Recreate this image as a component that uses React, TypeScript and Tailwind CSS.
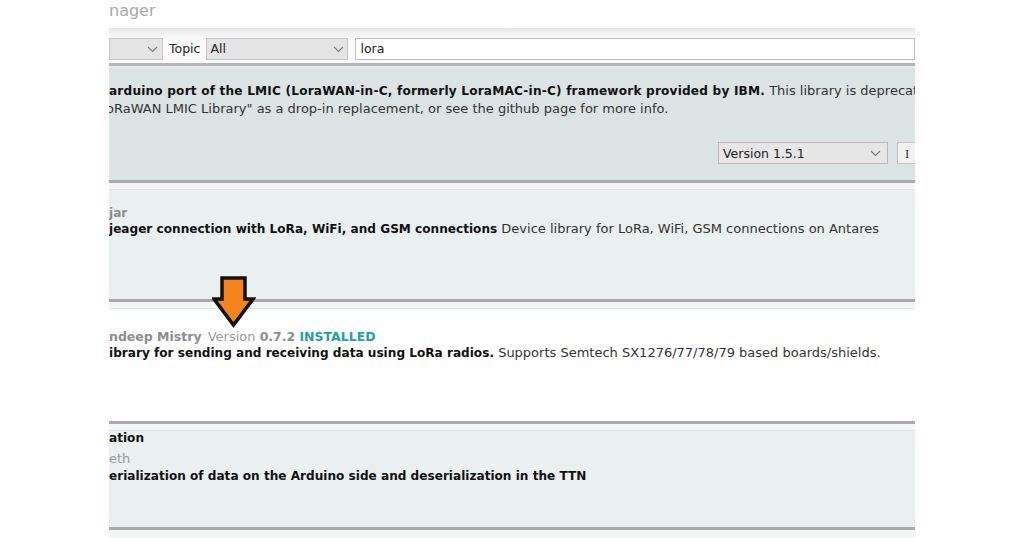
import React from 'react';

const Chevron = () => (
  <svg width="11" height="7" viewBox="0 0 11 7">
    <polyline points="1,1 5.5,5.5 10,1" fill="none" stroke="#7a7a7a" strokeWidth="1.2" />
  </svg>
);

const Divider = () => (
  <div className="flex flex-col">
    <div className="h-[3px] bg-[#a7abad]" />
    <div className="h-[6px] bg-[#f4f5f5]" />
    <div className="h-px bg-[#dde2e3]" />
  </div>
);

const DownArrow = () => (
  <svg className="absolute left-[212px] top-[276px]" width="44" height="52" viewBox="0 0 44 52">
    <polygon
      points="10,2 33,2 33,23 41,23 21.5,49 2,23 10,23"
      fill="#f5831f"
      stroke="#111"
      strokeWidth="3.5"
      strokeLinejoin="miter"
    />
  </svg>
);

const App = () => {
  return (
    <div className="relative h-[538px] w-[1024px] overflow-hidden bg-white font-['DejaVu_Sans',sans-serif] text-[13px]">
      <div className="ml-[109px] flex w-[806px] flex-col overflow-hidden">
        <p className="h-[28px] pt-[1px] text-[16px] leading-[20px] text-[#a8a8a8]">nager</p>

        {/* filter bar */}
        <div className="h-[9px] bg-gradient-to-b from-[#e6e6e6] to-[#f8f8f8]" />
        <div className="flex h-[24px] items-center gap-[6px] bg-[#fafafa] text-[12.5px] text-[#222]">
          <div className="flex h-[22px] w-[54px] items-center justify-end border border-[#c6c6c6] bg-[#e4e4e4] pr-[4px]">
            <Chevron />
          </div>
          <span>Topic</span>
          <div className="flex h-[22px] w-[142px] items-center justify-between border border-[#c6c6c6] bg-[#e4e4e4] px-[3px]">
            <span>All</span>
            <Chevron />
          </div>
          <div className="ml-[1px] flex h-[22px] flex-1 items-center border border-[#bdbdbd] bg-white px-[4px]">
            lora
          </div>
        </div>
        <div className="h-[2px] bg-[#fafafa]" />
        <div className="h-[3px] bg-[#b3b6b7]" />
        <div className="h-[2px] bg-[#e9ecec]" />

        {/* IBM LMIC */}
        <div className="flex h-[112px] flex-col bg-[#dce3e5] pt-[14px] leading-[17px] text-[#333]">
          <p className="whitespace-nowrap">
            <b className="text-[12.1px] tracking-[0.2px] text-[#111]">
              arduino port of the LMIC (LoraWAN-in-C, formerly LoraMAC-in-C) framework provided by IBM.
            </b>{' '}
            This library is deprecat
          </p>
          <p className="-ml-[3px] whitespace-nowrap">
            oRaWAN LMIC Library" as a drop-in replacement, or see the github page for more info.
          </p>
          <div className="mt-[25px] flex items-center gap-[9px] pl-[609px]">
            <div className="flex h-[22px] w-[170px] shrink-0 items-center justify-between border border-[#b9b9b9] bg-[#e6e6e6] pl-[4px] pr-[6px] text-[12.5px]">
              <span className="text-[#222]">Version 1.5.1</span>
              <Chevron />
            </div>
            <div className="flex h-[22px] w-[18px] shrink-0 items-center border-y border-l border-[#c2c2c2] bg-[#f1f1f1] pl-[7px] font-['Liberation_Serif',serif] text-[#4a2a1a]">
              I
            </div>
          </div>
        </div>
        <Divider />

        {/* Antares */}
        <div className="flex h-[109px] flex-col bg-[#eaeff0] pt-[15px] leading-[16px] text-[#333]">
          <p className="text-[12.1px] font-bold text-[#8d8d8d]">jar</p>
          <p className="whitespace-nowrap">
            <b className="text-[12.1px] text-[#111]">jeager connection with LoRa, WiFi, and GSM connections</b>{' '}
            Device library for LoRa, WiFi, GSM connections on Antares
          </p>
        </div>
        <Divider />

        {/* LoRa by Sandeep Mistry */}
        <div className="flex h-[112px] flex-col bg-white pt-[20px] leading-[16px] text-[#333]">
          <p className="whitespace-nowrap">
            <b className="text-[12.5px] text-[#8d8d8d]">ndeep Mistry</b>{' '}
            <span className="ml-[2px] text-[#9a9a9a]">Version</span>{' '}
            <b className="text-[12.5px] text-[#8d8d8d]">0.7.2</b>{' '}
            <b className="text-[12.5px] text-[#23a19f]">INSTALLED</b>
          </p>
          <p className="whitespace-nowrap">
            <b className="text-[12.1px] text-[#111]">ibrary for sending and receiving data using LoRa radios.</b>{' '}
            Supports Semtech SX1276/77/78/79 based boards/shields.
          </p>
        </div>
        <Divider />

        {/* TTN serialization */}
        <div className="flex h-[96px] flex-col bg-[#eaeff0] leading-[16px] text-[#333]">
          <p className="-mt-[1px] text-[12.1px] font-bold text-[#111]">ation</p>
          <p className="mt-[5px] text-[#9a9a9a]">eth</p>
          <p className="mt-[1px] whitespace-nowrap text-[12.1px] font-bold text-[#111]">
            erialization of data on the Arduino side and deserialization in the TTN
          </p>
        </div>
        <div className="h-[3px] bg-[#a7abad]" />
        <div className="h-[11px] bg-[#f4f5f5]" />
      </div>
      <DownArrow />
    </div>
  );
};

export default App;
